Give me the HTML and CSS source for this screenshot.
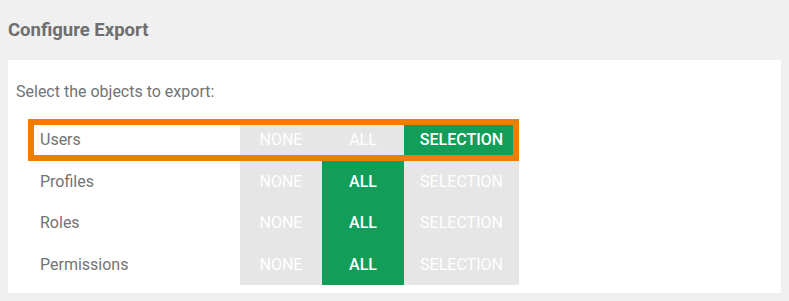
FILE: index.html
```html
<!DOCTYPE html>
<html>
<head>
<meta charset="utf-8">
<link rel="stylesheet" href="styles.css">
</head>
<body>
<h2 class="title">Configure Export</h2>
<div class="panel">
  <p class="intro">Select the objects to export:</p>
  <div class="table">
    <div class="row focused">
      <div class="label">Users</div>
      <div class="opt none">NONE</div>
      <div class="opt all">ALL</div>
      <div class="opt sel active">SELECTION</div>
    </div>
    <div class="row">
      <div class="label">Profiles</div>
      <div class="opt none">NONE</div>
      <div class="opt all active">ALL</div>
      <div class="opt sel">SELECTION</div>
    </div>
    <div class="row">
      <div class="label">Roles</div>
      <div class="opt none">NONE</div>
      <div class="opt all active">ALL</div>
      <div class="opt sel">SELECTION</div>
    </div>
    <div class="row">
      <div class="label">Permissions</div>
      <div class="opt none">NONE</div>
      <div class="opt all active">ALL</div>
      <div class="opt sel">SELECTION</div>
    </div>
  </div>
</div>
</body>
</html>
```

FILE: styles.css
```css
html, body {
  margin: 0;
  padding: 0;
}
body {
  background: #f0f0f0;
  font-family: Roboto, "Liberation Sans", sans-serif;
  padding: 8px;
}
.title {
  margin: 11px 0 0 0;
  height: 41px;
  font-size: 18.5px;
  font-weight: 700;
  color: #6e6e6e;
  line-height: 22px;
}
.panel {
  background: #fff;
  padding: 22px 8px 8px 8px;
  height: 203px;
}
.intro {
  margin: 0 0 18px 0;
  font-size: 16px;
  line-height: 19px;
  color: #737373;
}
.table {
  display: flex;
  flex-direction: column;
  margin-left: 12px;
  width: 491px;
}
.row {
  display: grid;
  grid-template-columns: 212px 82px 82px 115px;
  height: 41.5px;
}
.row.focused {
  outline: 6px solid #f07d00;
  outline-offset: -6px;
}
.label {
  display: flex;
  align-items: center;
  padding-left: 12px;
  font-size: 16px;
  color: #737373;
}
.opt {
  display: flex;
  align-items: center;
  justify-content: center;
  background: #e6e6e6;
  color: #fff;
  font-size: 16px;
}
.opt.active {
  background: #129d58;
  font-weight: 500;
}
```
